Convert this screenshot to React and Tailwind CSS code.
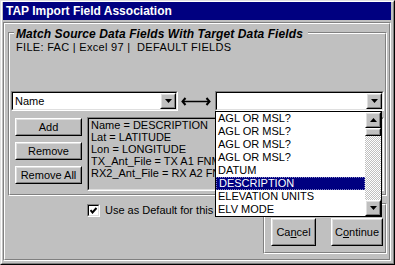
import React from 'react';

const Btn = ({ children, className = '' }) => (
  <div className={`flex shrink-0 bg-[#c0c0c0] border border-t-white border-l-white border-r-black border-b-black ${className}`}>
    <div className="flex-1 flex items-center justify-center border border-t-[#dfdfdf] border-l-[#dfdfdf] border-r-[#808080] border-b-[#808080] text-[11px] text-black">
      {children}
    </div>
  </div>
);

const Down = () => (
  <svg width="7" height="4" viewBox="0 0 7 4">
    <polygon points="0,0 7,0 3.5,4" fill="black" />
  </svg>
);

const Up = () => (
  <svg width="7" height="4" viewBox="0 0 7 4">
    <polygon points="0,4 7,4 3.5,0" fill="black" />
  </svg>
);

const Combo = ({ value, className = '' }) => (
  <div className={`h-[20px] flex border border-t-[#808080] border-l-[#808080] border-r-white border-b-white ${className}`}>
    <div className="flex-1 flex border border-t-black border-l-black border-r-[#dfdfdf] border-b-[#dfdfdf] bg-white">
      <div className="flex-1 pl-[2px] text-[11px] leading-[16px]">{value}</div>
      <Btn className="w-[16px] h-[16px]">
        <Down />
      </Btn>
    </div>
  </div>
);

const items = [
  'AGL OR MSL?',
  'AGL OR MSL?',
  'AGL OR MSL?',
  'AGL OR MSL?',
  'DATUM',
  'DESCRIPTION',
  'ELEVATION UNITS',
  'ELV MODE',
];

const DropList = () => (
  <div className="absolute z-10 top-full left-0 w-[167px] h-[106px] flex border border-black bg-white">
    <div className="flex-1 flex flex-col">
      {items.map((it, i) =>
        it === 'DESCRIPTION' ? (
          <div key={i} className="h-[13px] pl-[2px] text-[11px] leading-[11px] whitespace-nowrap bg-[#000080] text-white border border-dotted border-[#8080c0]">
            {it}
          </div>
        ) : (
          <div key={i} className="h-[13px] pl-[2px] text-[11px] leading-[13px] whitespace-nowrap">
            {it}
          </div>
        )
      )}
    </div>
    <div className="w-[16px] flex flex-col">
      <Btn className="h-[16px]">
        <Up />
      </Btn>
      <Btn className="h-[8px]" />
      <div className="flex-1 bg-[repeating-conic-gradient(#ffffff_0%_25%,#c0c0c0_0%_50%)] bg-[length:2px_2px]" />
      <Btn className="h-[16px]">
        <Down />
      </Btn>
    </div>
  </div>
);

export default function App() {
  return (
    <div className="w-[395px] h-[265px] bg-[#c0c0c0] text-black font-['Liberation_Sans',Arial,sans-serif] border border-t-[#dfdfdf] border-l-[#dfdfdf] border-r-black border-b-black">
      <div className="h-full flex flex-col border border-t-white border-l-white border-r-[#808080] border-b-[#808080] pl-px pr-[2px] pb-[2px]">
        {/* title bar */}
        <div className="h-[18px] shrink-0 bg-[#000080] pl-[3px] text-white font-bold text-[12px] leading-[18px] whitespace-nowrap">
          TAP Import Field Association
        </div>

        {/* client panel */}
        <div className="mt-[2px] flex-1 flex border border-t-[#808080] border-l-[#808080] border-r-white border-b-white">
          <div className="flex-1 flex flex-col border border-t-white border-l-white border-r-[#808080] border-b-[#808080]">
            {/* group box */}
            <div className="relative mt-[8px] ml-[3px] mr-[2px] h-[164px] shrink-0 flex border border-t-[#808080] border-l-[#808080] border-r-white border-b-white">
              <div className="absolute z-[1] left-[5px] top-[-6px] pl-[2px] pr-[5px] bg-[#c0c0c0] text-[12px] tracking-[0.1px] leading-[14px] font-bold italic whitespace-nowrap">
                Match Source Data Fields With Target Data Fields
              </div>
              <div className="flex-1 flex flex-col px-px border border-t-white border-l-white border-r-[#808080] border-b-[#808080]">
                <div className="mt-[7px] ml-[5px] text-[11px] tracking-[0.3px] leading-[13px] whitespace-pre">
                  FILE: FAC | Excel 97 |  DEFAULT FIELDS
                </div>

                <div className="mt-[37px] flex items-center">
                  <Combo value="Name" className="w-[167px]" />
                  <svg className="ml-[3px] shrink-0" width="30" height="9" viewBox="0 0 30 9">
                    <polyline points="4.5,1 1.5,4.5 4.5,8" fill="none" stroke="black" strokeWidth="2" />
                    <line x1="2" y1="4.5" x2="28" y2="4.5" stroke="black" strokeWidth="1.5" />
                    <polyline points="25.5,1 28.5,4.5 25.5,8" fill="none" stroke="black" strokeWidth="2" />
                  </svg>
                  <div className="relative ml-[4px] w-[169px]">
                    <Combo value="" />
                    <DropList />
                  </div>
                </div>

                <div className="mt-[6px] flex">
                  <div className="ml-[4px] mt-px w-[67px] flex flex-col gap-[6px]">
                    <Btn className="h-[18px]">Add</Btn>
                    <Btn className="h-[18px]">Remove</Btn>
                    <Btn className="h-[18px]">Remove All</Btn>
                  </div>
                  <div className="ml-[5px] flex-1 h-[74px] flex border border-t-[#808080] border-l-[#808080] border-r-white border-b-white">
                    <div className="flex-1 pl-[2px] border border-t-black border-l-black border-r-[#dfdfdf] border-b-[#dfdfdf]">
                      <div className="w-[124px] overflow-hidden text-[11px] leading-[12px] whitespace-nowrap">
                        <div>Name = DESCRIPTION</div>
                        <div>Lat = LATITUDE</div>
                        <div>Lon = LONGITUDE</div>
                        <div>TX_Ant_File = TX A1 FNM</div>
                        <div>RX2_Ant_File = RX A2 FNM</div>
                      </div>
                    </div>
                  </div>
                </div>
              </div>
            </div>

            {/* bottom row */}
            <div className="flex items-start">
              <div className="ml-[82px] mt-[8px] w-[128px] shrink-0 flex items-center gap-[5px]">
                <div className="w-[13px] h-[13px] shrink-0 flex border border-t-[#808080] border-l-[#808080] border-r-white border-b-white">
                  <div className="flex-1 flex items-center justify-center bg-white border border-t-black border-l-black border-r-[#dfdfdf] border-b-[#dfdfdf]">
                    <svg width="7" height="7" viewBox="0 0 7 7">
                      <polyline points="0.5,3 2.5,5.5 6.5,1" fill="none" stroke="black" strokeWidth="2" />
                    </svg>
                  </div>
                </div>
                <span className="w-[110px] overflow-hidden text-[11px] leading-[13px] whitespace-nowrap">Use as Default for this File Type</span>
              </div>

              <div className="ml-auto mr-[2px] mt-[7px] w-[124px] h-[51px] flex border border-t-[#808080] border-l-[#808080] border-r-white border-b-white">
                <div className="flex-1 flex items-start gap-[15px] pl-[6px] pt-[13px] border border-t-white border-l-white border-r-[#808080] border-b-[#808080]">
                  <Btn className="w-[45px] h-[28px]">
                    <span>Ca<u>n</u>cel</span>
                  </Btn>
                  <Btn className="w-[52px] h-[28px]">
                    <span>C<u>o</u>ntinue</span>
                  </Btn>
                </div>
              </div>
            </div>
          </div>
        </div>
      </div>
    </div>
  );
}
